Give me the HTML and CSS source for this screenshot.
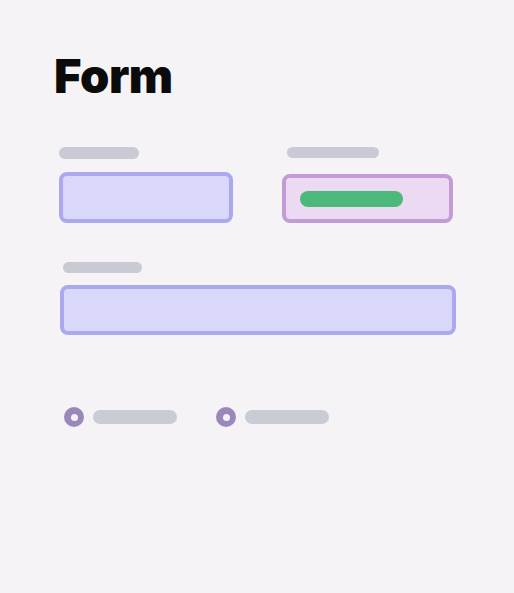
FILE: index.html
```html
<!DOCTYPE html>
<html>
<head>
<meta charset="utf-8">
<link rel="stylesheet" href="styles.css">
</head>
<body>
<main class="page">
  <h1 class="title">Form</h1>
  <div class="row">
    <div class="field field-a">
      <div class="label label-a"></div>
      <div class="input input-a"></div>
    </div>
    <div class="field field-b">
      <div class="label label-b"></div>
      <div class="select">
        <div class="pill"></div>
      </div>
    </div>
  </div>
  <div class="field field-c">
    <div class="label label-c"></div>
    <div class="input input-c"></div>
  </div>
  <div class="radios">
    <div class="radio radio-a"><span class="dot"></span><span class="radio-label"></span></div>
    <div class="radio radio-b"><span class="dot"></span><span class="radio-label"></span></div>
  </div>
</main>
</body>
</html>
```
FILE: styles.css
```css
* { box-sizing: border-box; }
html, body { margin: 0; padding: 0; }
body {
  background: #f5f3f6;
  width: 514px;
  height: 593px;
  overflow: hidden;
  font-family: Inter, "Liberation Sans", sans-serif;
}
.page {
  padding-top: 50px;
}
.title {
  margin: 0 0 0 54px;
  font-size: 47px;
  line-height: 52px;
  font-weight: 900;
  color: #0b0b0b;
  letter-spacing: -0.5px;
  height: 52px;
}
.row {
  display: flex;
  margin-top: 45px;
}
.field { display: flex; flex-direction: column; }
.label {
  height: 12px;
  border-radius: 6px;
  background: #c9cad3;
}
.field-a { margin-left: 59px; width: 174px; }
.label-a { width: 80px; }
.input {
  height: 50px;
  border: 4px solid #aaa9ef;
  background: #d9d8fa;
  border-radius: 8px;
}
.input-a { margin-top: 13px; height: 51px; }
.field-b { margin-left: 49px; width: 171px; }
.label-b { width: 92px; margin-left: 5px; height: 11px; }
.select {
  margin-top: 16px;
  height: 49px;
  border: 4px solid #c49bd7;
  background: #ecdaf2;
  border-radius: 8px;
  display: flex;
  align-items: center;
  padding-left: 14px;
}
.pill {
  width: 103px;
  height: 16px;
  border-radius: 8px;
  background: #4db87b;
}
.field-c { margin-left: 60px; width: 396px; margin-top: 39px; }
.label-c { width: 79px; margin-left: 3px; height: 11px; }
.input-c { margin-top: 12px; }
.radios {
  display: flex;
  margin-top: 72px;
  margin-left: 64px;
}
.radio { display: flex; align-items: center; }
.radio-b { margin-left: 39px; }
.dot {
  width: 20px;
  height: 20px;
  border-radius: 50%;
  background: #9b88ba;
  display: flex;
  align-items: center;
  justify-content: center;
}
.dot::after {
  content: "";
  width: 7px;
  height: 7px;
  border-radius: 50%;
  background: #f5f3f6;
}
.radio-label {
  margin-left: 9px;
  width: 84px;
  height: 14px;
  border-radius: 7px;
  background: #c9cbd5;
}
```
